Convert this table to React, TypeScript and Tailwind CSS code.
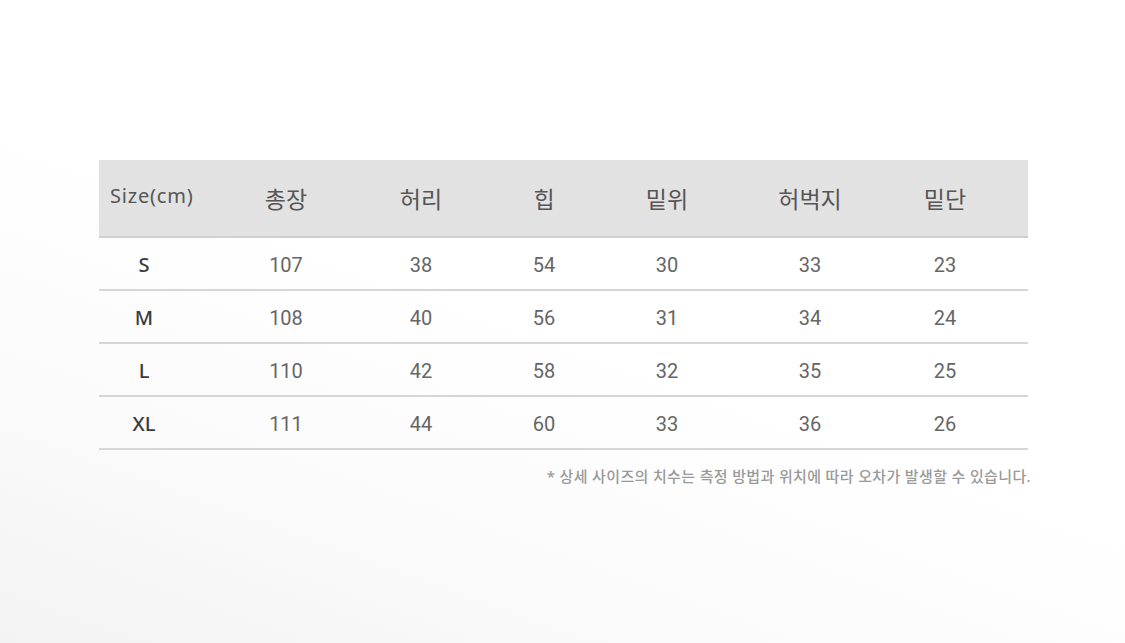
const cols = ['Size(cm)', '총장', '허리', '힙', '밑위', '허벅지', '밑단'];

const rows = [
  ['S', '107', '38', '54', '30', '33', '23'],
  ['M', '108', '40', '56', '31', '34', '24'],
  ['L', '110', '42', '58', '32', '35', '25'],
  ['XL', '111', '44', '60', '33', '36', '26'],
];

const grid = 'grid grid-cols-[117px_140px_130px_116px_130px_156px_140px]';

export default function App() {
  return (
    <div
      className="w-[1125px] h-[643px] overflow-hidden bg-[linear-gradient(20deg,#f3f3f3_0%,#fbfbfb_25%,#ffffff_50%)]"
      style={{ fontFamily: '"Noto Sans", "Noto Sans CJK KR", sans-serif' }}
    >
      <div className="pt-[160px] pl-[99px] w-[1028px]">
        {/* header */}
        <div className={`${grid} h-[78px] items-center bg-[#e2e2e2] border-b-2 border-[#cfcfcf]`}>
          {cols.map((c, i) =>
            i === 0 ? (
              <div key={c} className="pl-[11px] text-[20px] text-[#555] tracking-[0.8px] pb-[4px]">
                {c}
              </div>
            ) : (
              <div key={c} className={`text-center text-[23px] text-[#555] pt-[2px] ${i === 6 ? 'pr-[26px]' : ''}`}>
                {c}
              </div>
            )
          )}
        </div>

        {/* rows */}
        {rows.map((r) => (
          <div key={r[0]} className={`${grid} h-[53px] items-center pt-[3px] border-b-2 border-[#d6d6d6]`}>
            {r.map((v, i) =>
              i === 0 ? (
                <div key={i} className="text-center pr-[27px] text-[20px] font-medium text-[#3a3a3a]">
                  {v}
                </div>
              ) : (
                <div
                  key={i}
                  className={`text-center text-[20px] text-[#666] ${i === 6 ? 'pr-[26px]' : ''}`}
                  style={{ fontFamily: 'Roboto, "Noto Sans", sans-serif' }}
                >
                  {v}
                </div>
              )
            )}
          </div>
        ))}

        <p className="mt-[15px] text-right text-[15px] font-medium tracking-[0.35px] text-[#9a9a9a] mr-[-3px]">
          * 상세 사이즈의 치수는 측정 방법과 위치에 따라 오차가 발생할 수 있습니다.
        </p>
      </div>
    </div>
  );
}
